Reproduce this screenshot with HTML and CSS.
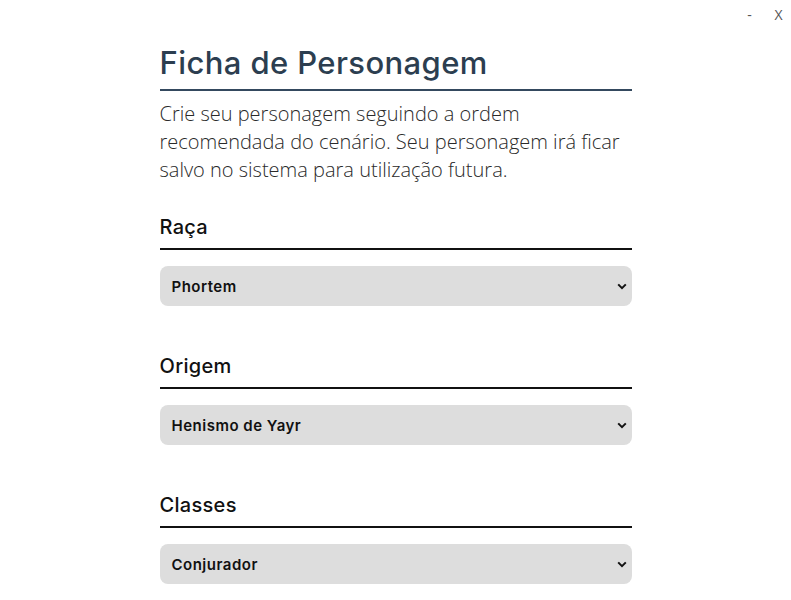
FILE: index.html
```html
<!DOCTYPE html>
<html lang="pt-BR">
<head>
<meta charset="utf-8">
<title>Ficha de Personagem</title>
<link rel="stylesheet" href="styles.css">
</head>
<body>
<div class="window-controls">
  <span class="ctrl">-</span>
  <span class="ctrl">X</span>
</div>
<main class="sheet">
  <header class="intro">
    <h1 class="title">Ficha de Personagem</h1>
    <p class="lead">Crie seu personagem seguindo a ordem recomendada do cenário. Seu personagem irá ficar salvo no sistema para utilização futura.</p>
  </header>

  <section class="field">
    <h2 class="field-title">Raça</h2>
    <div class="select">
      <span class="select-value">Phortem</span>
      <svg class="chevron" width="10" height="7" viewBox="0 0 10 7"><path d="M1.2 1.4 L5 5.2 L8.8 1.4" fill="none" stroke="#111" stroke-width="2"/></svg>
    </div>
  </section>

  <section class="field">
    <h2 class="field-title">Origem</h2>
    <div class="select">
      <span class="select-value">Henismo de Yayr</span>
      <svg class="chevron" width="10" height="7" viewBox="0 0 10 7"><path d="M1.2 1.4 L5 5.2 L8.8 1.4" fill="none" stroke="#111" stroke-width="2"/></svg>
    </div>
  </section>

  <section class="field">
    <h2 class="field-title">Classes</h2>
    <div class="select">
      <span class="select-value">Conjurador</span>
      <svg class="chevron" width="10" height="7" viewBox="0 0 10 7"><path d="M1.2 1.4 L5 5.2 L8.8 1.4" fill="none" stroke="#111" stroke-width="2"/></svg>
    </div>
  </section>
</main>
</body>
</html>
```
FILE: styles.css
```css
html, body {
  margin: 0;
  padding: 0;
  background: #fff;
}
body {
  font-family: "Inter", "Open Sans", sans-serif;
  color: #111;
}
.window-controls {
  position: absolute;
  top: 5px;
  right: 8px;
  display: flex;
  gap: 20px;
  font-family: "Open Sans", sans-serif;
  font-size: 14px;
  color: #555;
}
.ctrl {
  width: 9px;
  text-align: center;
}
.sheet {
  width: 472px;
  margin: 0 auto;
  padding-top: 43px;
}
.title {
  margin: 0;
  font-family: "Inter", sans-serif;
  font-size: 31px;
  font-weight: 500;
  line-height: 40px;
  color: #2c3e50;
  border-bottom: 2px solid #34495e;
  padding-bottom: 6px;
  letter-spacing: 0.4px;
}
.lead {
  margin: 9px 0 0;
  font-family: "Open Sans", sans-serif;
  font-weight: 300;
  font-size: 20px;
  line-height: 28px;
  color: #2a2a2a;
}
.field {
  margin-top: 29px;
}
.field + .field {
  margin-top: 46px;
}
.field-title {
  margin: 0;
  font-family: "Inter", sans-serif;
  font-size: 20px;
  font-weight: 500;
  line-height: 28px;
  padding-bottom: 7px;
  border-bottom: 2px solid #111;
  letter-spacing: 0.3px;
}
.select {
  margin-top: 16px;
  height: 40px;
  background: #dddddd;
  border-radius: 8px;
  display: flex;
  align-items: center;
  justify-content: space-between;
  padding: 0 5px 0 12px;
}
.select-value {
  font-family: "Inter", sans-serif;
  font-size: 15px;
  font-weight: 600;
  letter-spacing: 0.5px;
  color: #111;
}
.chevron {
  display: block;
  margin-top: 1px;
}
```
